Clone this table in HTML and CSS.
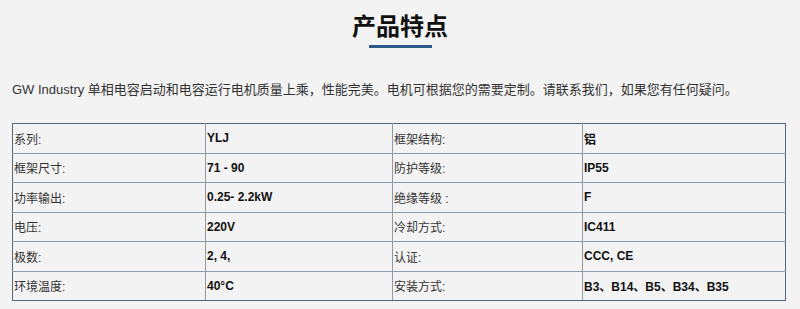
FILE: index.html
```html
<!DOCTYPE html>
<html lang="zh-CN">
<head>
<meta charset="utf-8">
<title>产品特点</title>
<link rel="stylesheet" href="styles.css">
</head>
<body>
<section class="features">
  <h2 class="title">产品特点</h2>
  <div class="title-bar"></div>
  <p class="intro">GW Industry 单相电容启动和电容运行电机质量上乘，性能完美。电机可根据您的需要定制。请联系我们，如果您有任何疑问。</p>
  <table class="specs">
    <colgroup>
      <col class="c1"><col class="c2"><col class="c3"><col class="c4">
    </colgroup>
    <tbody>
      <tr><td>系列:</td><td class="v">YLJ</td><td>框架结构:</td><td class="v">铝</td></tr>
      <tr><td>框架尺寸:</td><td class="v">71 - 90</td><td>防护等级:</td><td class="v">IP55</td></tr>
      <tr><td>功率输出:</td><td class="v">0.25- 2.2kW</td><td>绝缘等级 :</td><td class="v">F</td></tr>
      <tr><td>电压:</td><td class="v">220V</td><td>冷却方式:</td><td class="v">IC411</td></tr>
      <tr><td>极数:</td><td class="v">2, 4,</td><td>认证:</td><td class="v">CCC, CE</td></tr>
      <tr><td>环境温度:</td><td class="v">40°C</td><td>安装方式:</td><td class="v">B3、B14、B5、B34、B35</td></tr>
    </tbody>
  </table>
</section>
</body>
</html>
```

FILE: styles.css
```css
html, body {
  margin: 0;
  padding: 0;
  background: #f3f3f3;
}
body {
  font-family: "Liberation Sans", "Noto Sans CJK SC", sans-serif;
  color: #333;
}
.features {
  padding: 12px 12px 0 12px;
}
.title {
  margin: 0;
  text-align: center;
  font-size: 24px;
  line-height: 29px;
  font-weight: bold;
  color: #111;
}
.title-bar {
  width: 63px;
  height: 3px;
  margin: 4px auto 0 auto;
  background: #2b5a8a;
}
.intro {
  margin: 32px 0 0 0;
  font-size: 13px;
  line-height: 20px;
  color: #333;
  white-space: nowrap;
}
.specs {
  margin-top: 23px;
  width: 774px;
  table-layout: fixed;
  border-collapse: collapse;
  border: 1px solid #56667a;
  font-size: 12px;
}
.specs .c1 { width: 193px; }
.specs .c2 { width: 187px; }
.specs .c3 { width: 190px; }
.specs .c4 { width: 203px; }
.specs td {
  border: 1px solid #8f9aa6;
  padding: 0 1px;
  height: 28.5px;
  vertical-align: middle;
  color: #333;
}
.specs tr:first-child td { border-top-color: #56667a; }
.specs tr:last-child td { border-bottom-color: #56667a; }
.specs td:first-child { border-left-color: #56667a; }
.specs td:last-child { border-right-color: #56667a; }
.specs td.v {
  font-weight: bold;
  color: #111;
}
```
